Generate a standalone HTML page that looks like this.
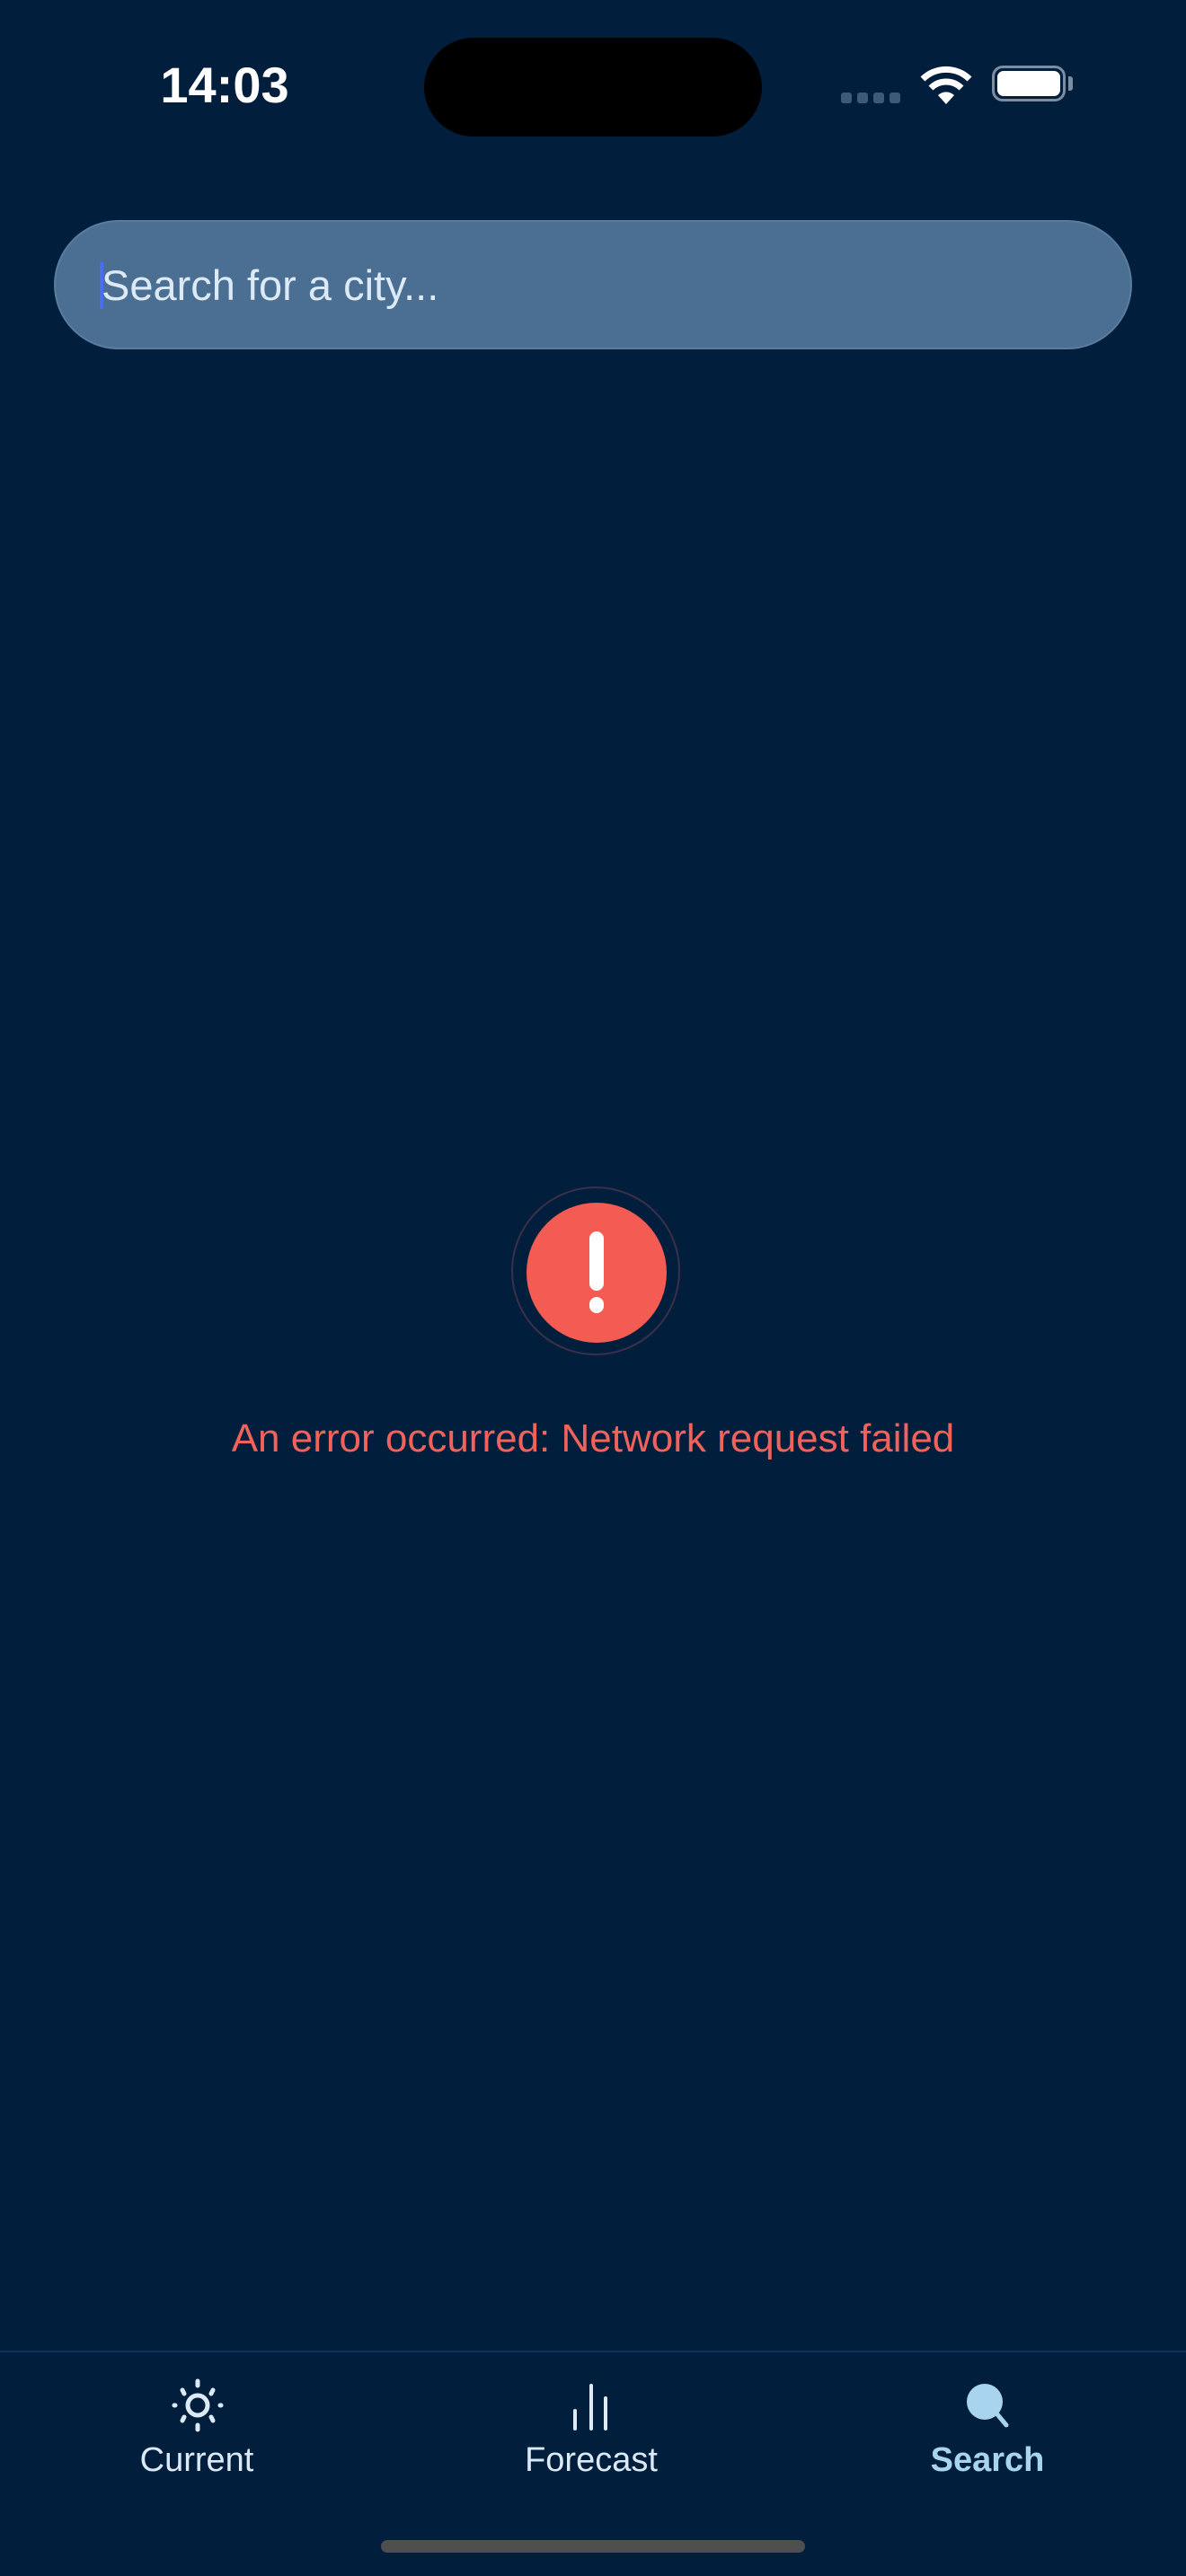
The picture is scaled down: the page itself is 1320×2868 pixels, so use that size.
<!DOCTYPE html>
<html><head><meta charset="utf-8"><style>
html,body{margin:0;padding:0;}
body{width:1320px;height:2868px;background:#011f3d;position:relative;overflow:hidden;font-family:"Liberation Sans",sans-serif;}
.abs{position:absolute;}
</style></head><body>
<div class="abs" style="left:150px;top:62px;width:200px;text-align:center;color:#fff;font-size:56px;font-weight:bold;line-height:66px;">14:03</div>
<div class="abs" style="left:472px;top:42px;width:376px;height:110px;border-radius:55px;background:#000;"></div>
<div class="abs" style="left:936px;top:103px;width:12px;height:12px;border-radius:3px;background:#3e5a78;"></div>
<div class="abs" style="left:954px;top:103px;width:12px;height:12px;border-radius:3px;background:#3e5a78;"></div>
<div class="abs" style="left:972px;top:103px;width:12px;height:12px;border-radius:3px;background:#3e5a78;"></div>
<div class="abs" style="left:990px;top:103px;width:12px;height:12px;border-radius:3px;background:#3e5a78;"></div>
<svg class="abs" style="left:1022px;top:72px" width="62" height="46" viewBox="0 0 62 46">
<path d="M31 44 L22 34 A13 13 0 0 1 40 34 Z" fill="#fff"/>
<path d="M14 26 A24 24 0 0 1 48 26" stroke="#fff" stroke-width="7" fill="none"/>
<path d="M5 16 A37 37 0 0 1 57 16" stroke="#fff" stroke-width="7" fill="none"/>
</svg>
<div class="abs" style="left:1104px;top:73px;width:82px;height:40px;border:3px solid #7d8ea3;border-radius:12px;box-sizing:border-box;"></div>
<div class="abs" style="left:1110px;top:79px;width:70px;height:28px;border-radius:7px;background:#fff;"></div>
<div class="abs" style="left:1189px;top:85px;width:5px;height:16px;border-radius:0 3px 3px 0;background:#7d8ea3;"></div>

<div class="abs" style="left:60px;top:245px;width:1200px;height:144px;border-radius:72px;background:#4b6f93;border:2px solid #5a7c9e;box-sizing:border-box;"></div>
<div class="abs" style="left:111px;top:292px;width:4px;height:52px;background:#4a6cf0;"></div>
<div class="abs" style="left:113px;top:288px;color:#dce9f6;font-size:47px;line-height:60px;">Search for a city...</div>

<div class="abs" style="left:569px;top:1321px;width:188px;height:188px;border-radius:50%;border:2px solid #3a3048;box-sizing:border-box;"></div>
<div class="abs" style="left:586px;top:1339px;width:156px;height:156px;border-radius:50%;background:#f45b52;"></div>
<div class="abs" style="left:656px;top:1371px;width:16px;height:66px;border-radius:8px;background:#fff;"></div>
<div class="abs" style="left:656px;top:1444px;width:16px;height:18px;border-radius:8px;background:#fff;"></div>
<div class="abs" style="left:0;top:1576px;width:1320px;text-align:center;color:#f0625a;font-size:44px;line-height:52px;">An error occurred: Network request failed</div>

<div class="abs" style="left:0;top:2617px;width:1320px;height:2px;background:#0a3464;"></div>
<svg class="abs" style="left:186px;top:2644px" width="68" height="68" viewBox="0 0 68 68" stroke="#dceaf7" stroke-width="5" stroke-linecap="round" fill="none">
<circle cx="34" cy="34" r="11"/>
<path d="M34 7v5M34 56v5M8 34h1M59 34h1M17 17l2 4M51 17l-2 4M17 51l2-4M51 51l-2-4"/>
</svg>
<svg class="abs" style="left:634px;top:2644px" width="48" height="68" viewBox="0 0 48 68" stroke="#dceaf7" stroke-width="4" stroke-linecap="round" fill="none">
<path d="M6 60V40M24 60V12M40 60V26"/>
</svg>
<svg class="abs" style="left:1074px;top:2652px" width="52" height="52" viewBox="0 0 52 52">
<circle cx="22" cy="22" r="20" fill="#a9d4f0"/>
<path d="M36 36L46 48" stroke="#a9d4f0" stroke-width="5" stroke-linecap="round"/>
</svg>
<div class="abs" style="left:119px;top:2715px;width:200px;text-align:center;color:#dceaf7;font-size:38px;line-height:48px;">Current</div>
<div class="abs" style="left:558px;top:2715px;width:200px;text-align:center;color:#dceaf7;font-size:38px;line-height:48px;">Forecast</div>
<div class="abs" style="left:999px;top:2715px;width:200px;text-align:center;color:#a9d4f0;font-size:38px;line-height:48px;font-weight:bold;">Search</div>
<div class="abs" style="left:424px;top:2828px;width:472px;height:14px;border-radius:7px;background:#4f4f4f;"></div>
</body></html>
